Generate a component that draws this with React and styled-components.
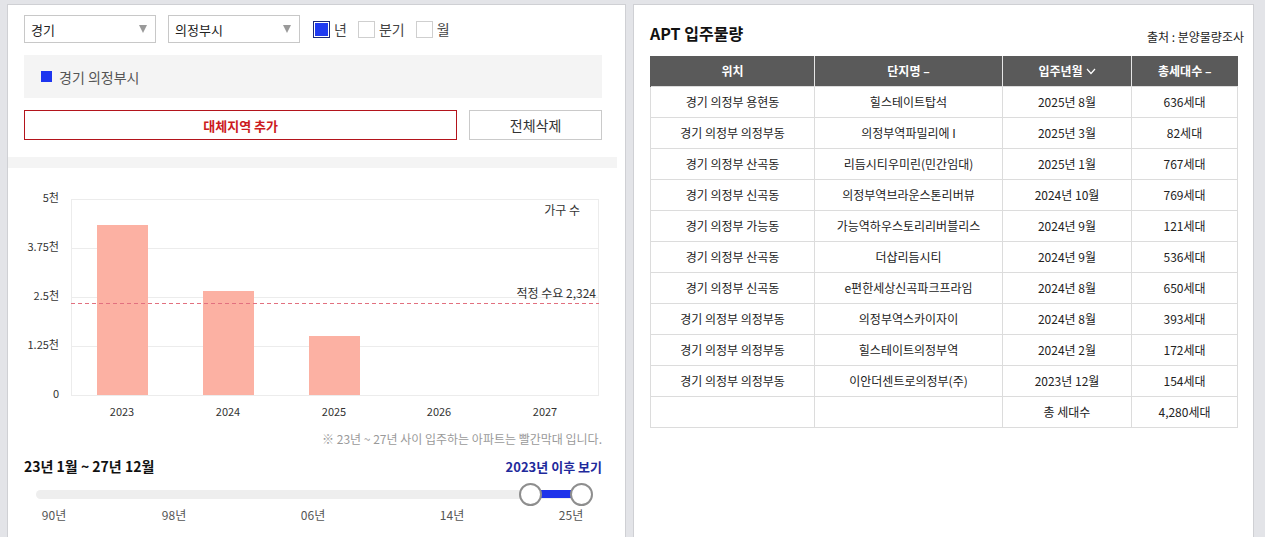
import React from 'react';
import styled, { createGlobalStyle } from 'styled-components';

const GlobalStyle = createGlobalStyle`
  html, body {
    margin: 0;
    padding: 0;
    overflow: hidden;
    background: #e3e4e8;
  }
  body {
    font-family: "Noto Sans CJK KR", "Noto Sans", sans-serif;
    color: #222;
  }
  * { box-sizing: border-box; }
`;

const Page = styled.div`
  display: flex;
  gap: 7px;
  padding: 4px 0 0 7px;
`;

const Panel = styled.section`
  width: ${(p) => p.w}px;
  height: 560px;
  background: #fff;
  border: 1px solid #cfd0d4;
  border-bottom: none;
`;

const LeftInner = styled.div`
  width: 609px;
`;

const Controls = styled.div`
  display: flex;
  flex-direction: column;
  gap: 12px;
  padding: 10px 15px 0 16px;
`;

const FilterRow = styled.div`
  display: flex;
  align-items: center;
  height: 28px;
`;

const Select = styled.div`
  width: 132px;
  height: 28px;
  margin-right: 12px;
  border: 1px solid #c8c8c8;
  display: flex;
  align-items: center;
  justify-content: space-between;
  padding: 0 8px 0 6px;
  font-size: 13px;
  color: #222;
  &::after {
    content: '';
    border-left: 4.5px solid transparent;
    border-right: 4.5px solid transparent;
    border-top: 8px solid #9a9a9a;
  }
`;

const Check = styled.span`
  width: 17px;
  height: 17px;
  margin-left: ${(p) => (p.first ? 1 : 11)}px;
  border: 1px solid ${(p) => (p.checked ? '#1c2a78' : '#cfcfcf')};
  background: ${(p) => (p.checked ? '#1f3af0' : '#fff')};
  box-shadow: ${(p) => (p.checked ? 'inset 0 0 0 1px #fff' : 'none')};
`;

const CheckLabel = styled.span`
  margin-left: 4px;
  font-size: 14px;
  color: #444;
`;

const SelectedBox = styled.div`
  height: 43px;
  background: #f4f4f4;
  display: flex;
  align-items: center;
  gap: 7px;
  padding: 0 17px;
  font-size: 14px;
  color: #555;
`;

const ColorSquare = styled.span`
  width: 11px;
  height: 11px;
  background: #1d35ef;
`;

const ButtonRow = styled.div`
  display: flex;
  gap: 12px;
`;

const Button = styled.button`
  height: 30px;
  width: ${(p) => (p.primary ? 434 : 133)}px;
  background: #fff;
  border: 1px solid ${(p) => (p.primary ? '#b3141c' : '#cacaca')};
  color: ${(p) => (p.primary ? '#cc1a20' : '#333')};
  font-family: inherit;
  font-size: ${(p) => (p.primary ? 13 : 14)}px;
  font-weight: ${(p) => (p.primary ? 700 : 400)};
  padding: 0;
`;

const Band = styled.div`
  height: 11px;
  margin-top: 17px;
  background: #f4f4f4;
`;

const ChartBox = styled.div`
  margin-top: 13px;
  height: 240px;
  svg { display: block; font-family: "Noto Sans CJK KR", sans-serif; }
`;

const Note = styled.div`
  margin-top: 9px;
  padding-right: 15px;
  text-align: right;
  font-size: 12px;
  line-height: 18px;
  color: #9a9a9a;
`;

const RangeRow = styled.div`
  margin-top: 8px;
  padding: 0 15px 0 16px;
  display: flex;
  justify-content: space-between;
  align-items: center;
  height: 20px;
`;

const RangeText = styled.span`
  font-size: 14px;
  font-weight: 700;
  color: #111;
`;

const RangeLink = styled.span`
  font-size: 13px;
  font-weight: 700;
  color: #1f2a9c;
`;

const Slider = styled.div`
  position: relative;
  margin: 7px 0 0 28px;
  width: 552px;
  height: 23px;
`;

const Track = styled.div`
  position: absolute;
  left: 0;
  right: 0;
  top: 7px;
  height: 9px;
  border-radius: 5px;
  background: #eeeeee;
`;

const Fill = styled.div`
  position: absolute;
  top: 7px;
  height: 8px;
  background: #1e33ea;
`;

const Handle = styled.div`
  position: absolute;
  top: 0;
  width: 23px;
  height: 23px;
  margin-left: -11px;
  border-radius: 50%;
  background: #fff;
  border: 2px solid #8e8e8e;
`;

const Marks = styled.div`
  position: relative;
  height: 18px;
`;

const Mark = styled.span`
  position: absolute;
  top: 0;
  transform: translateX(-50%);
  font-size: 12px;
  line-height: 18px;
  color: #555;
`;

const RightInner = styled.div`
  padding: 17px 16px 0 16px;
`;

const TitleRow = styled.div`
  display: flex;
  justify-content: space-between;
  align-items: center;
  height: 22px;
  margin-right: -7px;
`;

const Title = styled.h2`
  margin: 0;
  font-size: 16px;
  font-weight: 700;
  color: #111;
`;

const Source = styled.span`
  font-size: 12px;
  color: #222;
  margin-top: 6px;
`;

const Table = styled.table`
  margin-top: 12px;
  width: 587px;
  border-collapse: collapse;
  table-layout: fixed;
  font-size: 12px;
`;

const Th = styled.th`
  height: 30px;
  padding: 0;
  background: #5a5a5a;
  color: #fff;
  font-weight: 700;
  font-size: 12px;
  border-left: 1px solid #e6e6e6;
  &:first-child { border-left: 1px solid #5a5a5a; }
`;

const Td = styled.td`
  height: 31px;
  padding: 0;
  text-align: center;
  color: #222;
  border: 1px solid #dcdcdc;
`;

const years = [
  { label: '2023', x: 114, top: 44 },
  { label: '2024', x: 220, top: 110 },
  { label: '2025', x: 326, top: 155 },
  { label: '2026', x: 431 },
  { label: '2027', x: 537 },
];

const yTicks = [
  { label: '5천', y: 18 },
  { label: '3.75천', y: 67 },
  { label: '2.5천', y: 116 },
  { label: '1.25천', y: 165 },
  { label: '0', y: 214 },
];

const Chart = () => (
  <svg width="609" height="240" viewBox="0 0 609 240">
    {yTicks.map((t) => (
      <g key={t.label}>
        <line x1="63" x2="591" y1={t.y + 0.5} y2={t.y + 0.5} stroke="#ececec" />
        <text x="51" y={t.y} fontSize="11" fill="#333" textAnchor="end" dominantBaseline="middle">
          {t.label}
        </text>
      </g>
    ))}
    <line x1="63.5" x2="63.5" y1="18" y2="214" stroke="#ececec" />
    <line x1="590.5" x2="590.5" y1="18" y2="214" stroke="#ececec" />
    {years.map((y) => (
      <g key={y.label}>
        {y.top && <rect x={y.x - 25} y={y.top} width="51" height={214 - y.top} fill="#fcb1a3" />}
        <text x={y.x} y="232" fontSize="11" fill="#333" textAnchor="middle" dominantBaseline="middle">
          {y.label}
        </text>
      </g>
    ))}
    <line x1="63" x2="591" y1="122.5" y2="122.5" stroke="#e2707f" strokeDasharray="4 3" />
    <text x="572" y="31" fontSize="12" fill="#333" textAnchor="end" dominantBaseline="middle">
      가구 수
    </text>
    <text x="588" y="114" fontSize="12" fill="#333" textAnchor="end" dominantBaseline="middle">
      적정 수요 2,324
    </text>
  </svg>
);

const marks = [
  { label: '90년', left: 18 },
  { label: '98년', left: 138 },
  { label: '06년', left: 277 },
  { label: '14년', left: 416 },
  { label: '25년', left: 535 },
];

const rows = [
  ['경기 의정부 용현동', '힐스테이트탑석', '2025년 8월', '636세대'],
  ['경기 의정부 의정부동', '의정부역파밀리에 I', '2025년 3월', '82세대'],
  ['경기 의정부 산곡동', '리듬시티우미린(민간임대)', '2025년 1월', '767세대'],
  ['경기 의정부 신곡동', '의정부역브라운스톤리버뷰', '2024년 10월', '769세대'],
  ['경기 의정부 가능동', '가능역하우스토리리버블리스', '2024년 9월', '121세대'],
  ['경기 의정부 산곡동', '더샵리듬시티', '2024년 9월', '536세대'],
  ['경기 의정부 신곡동', 'e편한세상신곡파크프라임', '2024년 8월', '650세대'],
  ['경기 의정부 의정부동', '의정부역스카이자이', '2024년 8월', '393세대'],
  ['경기 의정부 의정부동', '힐스테이트의정부역', '2024년 2월', '172세대'],
  ['경기 의정부 의정부동', '이안더센트로의정부(주)', '2023년 12월', '154세대'],
];

const Chevron = () => (
  <svg width="10" height="7" viewBox="0 0 10 7" style={{ marginLeft: 3, verticalAlign: 1 }}>
    <path d="M1 1l4 4.5L9 1" fill="none" stroke="#fff" strokeWidth="1.2" />
  </svg>
);

const App = () => (
  <>
    <GlobalStyle />
    <Page>
      <Panel w={619}>
        <LeftInner>
          <Controls>
            <FilterRow>
              <Select>경기</Select>
              <Select>의정부시</Select>
              <Check checked first />
              <CheckLabel>년</CheckLabel>
              <Check />
              <CheckLabel>분기</CheckLabel>
              <Check />
              <CheckLabel>월</CheckLabel>
            </FilterRow>
            <SelectedBox>
              <ColorSquare />
              경기 의정부시
            </SelectedBox>
            <ButtonRow>
              <Button primary>대체지역 추가</Button>
              <Button>전체삭제</Button>
            </ButtonRow>
          </Controls>
          <Band />
          <ChartBox>
            <Chart />
          </ChartBox>
          <Note>※ 23년 ~ 27년 사이 입주하는 아파트는 빨간막대 입니다.</Note>
          <RangeRow>
            <RangeText>23년 1월 ~ 27년 12월</RangeText>
            <RangeLink>2023년 이후 보기</RangeLink>
          </RangeRow>
          <Slider>
            <Track />
            <Fill style={{ left: 494, width: 51 }} />
            <Handle style={{ left: 494 }} />
            <Handle style={{ left: 545 }} />
          </Slider>
          <Marks>
            {marks.map((m) => (
              <Mark key={m.label} style={{ left: 28 + m.left }}>
                {m.label}
              </Mark>
            ))}
          </Marks>
        </LeftInner>
      </Panel>
      <Panel w={621}>
        <RightInner>
          <TitleRow>
            <Title>APT 입주물량</Title>
            <Source>출처 : 분양물량조사</Source>
          </TitleRow>
          <Table>
            <colgroup>
              <col style={{ width: 164 }} />
              <col style={{ width: 188 }} />
              <col style={{ width: 129 }} />
              <col style={{ width: 106 }} />
            </colgroup>
            <thead>
              <tr>
                <Th>위치</Th>
                <Th>단지명 –</Th>
                <Th>
                  입주년월
                  <Chevron />
                </Th>
                <Th>총세대수 –</Th>
              </tr>
            </thead>
            <tbody>
              {rows.map((r, i) => (
                <tr key={i}>
                  {r.map((c, j) => (
                    <Td key={j}>{c}</Td>
                  ))}
                </tr>
              ))}
              <tr>
                <Td />
                <Td />
                <Td>총 세대수</Td>
                <Td>4,280세대</Td>
              </tr>
            </tbody>
          </Table>
        </RightInner>
      </Panel>
    </Page>
  </>
);

export default App;
